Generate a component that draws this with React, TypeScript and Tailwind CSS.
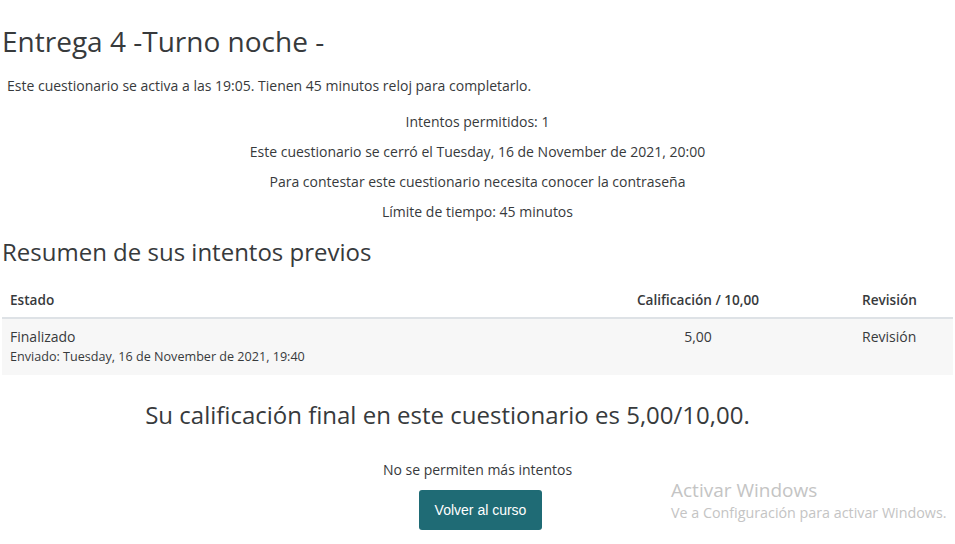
import React from "react";

export default function App() {
  const font = { fontFamily: '"Open Sans", "Noto Sans", sans-serif' };
  return (
    <div className="relative w-[955px] h-[544px] bg-white overflow-hidden text-[#373a3c]" style={font}>
      <div className="flex flex-col">
        <h2 className="pl-[2px] pt-[21px] text-[28px] leading-[40px] font-normal">Entrega 4 -Turno noche -</h2>
        <p className="pl-[7px] mt-[15px] text-[14px] leading-[20px]">
          Este cuestionario se activa a las 19:05. Tienen 45 minutos reloj para completarlo.
        </p>
        <div className="mt-[16px] flex flex-col items-center text-[14px] leading-[20px] gap-[10px]">
          <p>Intentos permitidos: 1</p>
          <p>Este cuestionario se cerró el Tuesday, 16 de November de 2021, 20:00</p>
          <p>Para contestar este cuestionario necesita conocer la contraseña</p>
          <p>Límite de tiempo: 45 minutos</p>
        </div>
        <h3 className="pl-[2px] mt-[14px] text-[24px] leading-[32px] font-normal">Resumen de sus intentos previos</h3>
        <div className="mx-[2px] mt-[15px] w-[951px] text-[14px]">
          <div className="flex h-[36px] items-center font-semibold border-b-2 border-[#dee2e6] text-[13.6px]">
            <div className="flex-1 pl-[8px]">Estado</div>
            <div className="w-[180px] pr-[28px] text-center">Calificación / 10,00</div>
            <div className="w-[151px] pl-[60px]">Revisión</div>
          </div>
          <div className="flex h-[56px] bg-[#f7f7f7] pt-[8px]">
            <div className="flex-1 pl-[8px] flex flex-col">
              <span className="leading-[20px]">Finalizado</span>
              <span className="text-[12.6px] leading-[18px] mt-[1px]">Enviado: Tuesday, 16 de November de 2021, 19:40</span>
            </div>
            <div className="w-[180px] pr-[28px] text-center leading-[20px]">5,00</div>
            <div className="w-[151px] pl-[60px] leading-[20px]">Revisión</div>
          </div>
        </div>
        <div className="mt-[24px] flex justify-center pr-[60px]">
          <p className="text-[24px] leading-[32px]">Su calificación final en este cuestionario es 5,00/10,00.</p>
        </div>
        <div className="mt-[29px] flex flex-col items-center">
          <p className="text-[14px] leading-[20px]">No se permiten más intentos</p>
          <button
            className="mt-[10px] ml-[6px] h-[40px] px-[16px] rounded-[3px] bg-[#1f6b75] text-white text-[14px]"
            style={{ fontFamily: '"Liberation Sans", Arial, sans-serif' }}
          >
            Volver al curso
          </button>
        </div>
      </div>
      <div className="absolute left-[671px] top-[478px] text-[#c4c4c4]" style={{ fontFamily: '"Open Sans", "Noto Sans", sans-serif' }}>
        <div className="text-[19px] leading-[24px]">Activar Windows</div>
        <div className="text-[14.3px] leading-[20px] mt-[1px]">Ve a Configuración para activar Windows.</div>
      </div>
    </div>
  );
}
